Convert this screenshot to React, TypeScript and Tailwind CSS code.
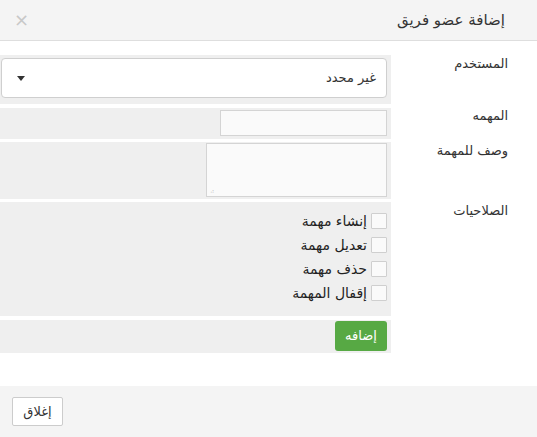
const font = { fontFamily: '"DejaVu Sans", "Noto Sans", sans-serif' };

const perms = ["إنشاء مهمة", "تعديل مهمة", "حذف مهمة", "إقفال المهمة"];

export default function App() {
  return (
    <div dir="rtl" style={font} className="w-[537px] h-[437px] bg-white text-[#333] flex flex-col overflow-hidden">
      {/* header */}
      <div className="h-[41px] bg-[#f4f4f4] border-b border-[#dedede] flex items-center justify-between pr-[32px] pl-[14px] shrink-0">
        <h4 className="text-[15px] leading-none">إضافة عضو فريق</h4>
        <span className="text-[#c8c8c8] text-[18px] leading-none">×</span>
      </div>

      {/* body */}
      <div className="flex-1 pt-[14px]">
        {/* user */}
        <div className="flex">
          <label className="w-[146px] shrink-0 pr-[29px] pt-[1px] text-[13px] leading-[16px]">المستخدم</label>
          <div className="w-[391px] h-[49px] bg-[#efefef] pt-[3px] pr-[4px] pl-[1px]">
            <div className="h-[40px] bg-white border border-[#cfcfcf] rounded-[4px] flex items-center justify-between pr-[10px] pl-[15px] text-[13px]">
              <span>غير محدد</span>
              <span className="w-0 h-0 border-l-[4px] border-r-[4px] border-t-[5px] border-l-transparent border-r-transparent border-t-[#333]" />
            </div>
          </div>
        </div>

        {/* task */}
        <div className="flex mt-[4px]">
          <label className="w-[146px] shrink-0 pr-[29px] text-[13px] leading-[16px]">المهمه</label>
          <div className="w-[391px] h-[31px] bg-[#efefef] pt-[2px] pr-[4px]">
            <div className="w-[167px] h-[26px] bg-[#fafafa] border border-[#d4d4d4]" />
          </div>
        </div>

        {/* description */}
        <div className="flex mt-[3px]">
          <label className="w-[146px] shrink-0 pr-[29px] pt-[1px] text-[13px] leading-[16px]">وصف للمهمة</label>
          <div className="w-[391px] h-[57px] bg-[#efefef] pt-[1px] pr-[4px]">
            <div className="relative w-[181px] h-[54px] bg-[#fafafa] border border-[#d4d4d4]">
              <span className="absolute left-[3px] bottom-[2px] text-[#bbb] text-[6px] leading-none">⠴</span>
            </div>
          </div>
        </div>

        {/* permissions */}
        <div className="flex mt-[3px]">
          <label className="w-[146px] shrink-0 pr-[29px] pt-[1px] text-[13px] leading-[16px]">الصلاحيات</label>
          <div className="w-[391px] h-[114px] bg-[#efefef] pt-[11px] pr-[4px] flex flex-col gap-[8px]">
            {perms.map((p) => (
              <div key={p} className="flex items-center gap-[4px] h-[16px]">
                <span className="w-[16px] h-[16px] bg-[#fafafa] border border-[#cfcfcf] rounded-[1px]" />
                <span className="text-[14px] text-[#222]">{p}</span>
              </div>
            ))}
          </div>
        </div>

        {/* submit */}
        <div className="flex mt-[4px]">
          <div className="w-[146px] shrink-0" />
          <div className="w-[391px] h-[33px] bg-[#efefef] pt-[1px] pr-[4px]">
            <button className="w-[52px] h-[30px] bg-[#57a944] rounded-[3px] text-white text-[13px]">إضافه</button>
          </div>
        </div>
      </div>

      {/* footer */}
      <div className="h-[51px] bg-[#f4f4f4] flex items-center justify-end pl-[12px] shrink-0">
        <button className="w-[51px] h-[29px] bg-white border border-[#cccccc] rounded-[2px] text-[13px]">إغلاق</button>
      </div>
    </div>
  );
}
